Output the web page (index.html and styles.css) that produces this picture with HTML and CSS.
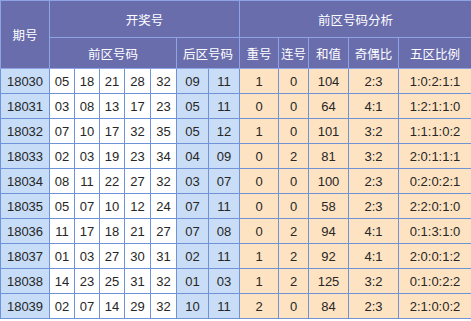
FILE: index.html
```html
<!DOCTYPE html>
<html>
<head>
<meta charset="utf-8">
<link rel="stylesheet" href="styles.css">
</head>
<body>
<table class="lotto">
<colgroup>
<col class="w49"><col class="w25"><col class="w25"><col class="w25"><col class="w26"><col class="w26"><col class="w32"><col class="w31"><col class="w39"><col class="w30"><col class="w40"><col class="w50"><col class="w73">
</colgroup>
<thead>
<tr class="h1">
<th rowspan="2" class="hd">期号</th>
<th colspan="7" class="hd">开奖号</th>
<th colspan="5" class="hd">前区号码分析</th>
</tr>
<tr class="h2">
<th colspan="5" class="hd">前区号码</th>
<th colspan="2" class="hd">后区号码</th>
<th class="hd">重号</th>
<th class="hd">连号</th>
<th class="hd">和值</th>
<th class="hd">奇偶比</th>
<th class="hd">五区比例</th>
</tr>
</thead>
<tbody>
<tr><td class="id">18030</td><td class="f">05</td><td class="f">18</td><td class="f">21</td><td class="f">28</td><td class="f">32</td><td class="b">09</td><td class="b">11</td><td class="a">1</td><td class="a">0</td><td class="a">104</td><td class="a">2:3</td><td class="a">1:0:2:1:1</td></tr>
<tr><td class="id">18031</td><td class="f">03</td><td class="f">08</td><td class="f">13</td><td class="f">17</td><td class="f">23</td><td class="b">05</td><td class="b">11</td><td class="a">0</td><td class="a">0</td><td class="a">64</td><td class="a">4:1</td><td class="a">1:2:1:1:0</td></tr>
<tr><td class="id">18032</td><td class="f">07</td><td class="f">10</td><td class="f">17</td><td class="f">32</td><td class="f">35</td><td class="b">05</td><td class="b">12</td><td class="a">1</td><td class="a">0</td><td class="a">101</td><td class="a">3:2</td><td class="a">1:1:1:0:2</td></tr>
<tr><td class="id">18033</td><td class="f">02</td><td class="f">03</td><td class="f">19</td><td class="f">23</td><td class="f">34</td><td class="b">04</td><td class="b">09</td><td class="a">0</td><td class="a">2</td><td class="a">81</td><td class="a">3:2</td><td class="a">2:0:1:1:1</td></tr>
<tr><td class="id">18034</td><td class="f">08</td><td class="f">11</td><td class="f">22</td><td class="f">27</td><td class="f">32</td><td class="b">03</td><td class="b">07</td><td class="a">0</td><td class="a">0</td><td class="a">100</td><td class="a">2:3</td><td class="a">0:2:0:2:1</td></tr>
<tr><td class="id">18035</td><td class="f">05</td><td class="f">07</td><td class="f">10</td><td class="f">12</td><td class="f">24</td><td class="b">07</td><td class="b">11</td><td class="a">0</td><td class="a">0</td><td class="a">58</td><td class="a">2:3</td><td class="a">2:2:0:1:0</td></tr>
<tr><td class="id">18036</td><td class="f">11</td><td class="f">17</td><td class="f">18</td><td class="f">21</td><td class="f">27</td><td class="b">07</td><td class="b">08</td><td class="a">0</td><td class="a">2</td><td class="a">94</td><td class="a">4:1</td><td class="a">0:1:3:1:0</td></tr>
<tr><td class="id">18037</td><td class="f">01</td><td class="f">03</td><td class="f">27</td><td class="f">30</td><td class="f">31</td><td class="b">02</td><td class="b">11</td><td class="a">1</td><td class="a">2</td><td class="a">92</td><td class="a">4:1</td><td class="a">2:0:0:1:2</td></tr>
<tr><td class="id">18038</td><td class="f">14</td><td class="f">23</td><td class="f">25</td><td class="f">31</td><td class="f">32</td><td class="b">01</td><td class="b">03</td><td class="a">1</td><td class="a">2</td><td class="a">125</td><td class="a">3:2</td><td class="a">0:1:0:2:2</td></tr>
<tr><td class="id">18039</td><td class="f">02</td><td class="f">07</td><td class="f">14</td><td class="f">29</td><td class="f">32</td><td class="b">10</td><td class="b">11</td><td class="a">2</td><td class="a">0</td><td class="a">84</td><td class="a">2:3</td><td class="a">2:1:0:0:2</td></tr>
</tbody>
</table>
</body>
</html>
```
FILE: styles.css
```css
html, body {
  margin: 0;
  padding: 0;
  background: #ffffff;
}
.lotto {
  border-collapse: collapse;
  table-layout: fixed;
  width: 471px;
  font-family: "Liberation Sans", Arial, "Noto Sans CJK SC", sans-serif;
  font-size: 13px;
  color: #262626;
}
.w49 { width: 49px; }
.w25 { width: 25px; }
.w26 { width: 26px; }
.w32 { width: 32px; }
.w31 { width: 31px; }
.w39 { width: 39px; }
.w30 { width: 30px; }
.w40 { width: 40px; }
.w50 { width: 50px; }
.w73 { width: 73px; }
.lotto th, .lotto td {
  padding: 0;
  text-align: center;
  vertical-align: middle;
  overflow: hidden;
  white-space: nowrap;
}
.hd {
  background: #696dac;
  color: #ffffff;
  font-family: "Noto Sans CJK SC", sans-serif;
  font-weight: normal;
  font-size: 12.5px;
  border: 1px solid #8fa4e6;
}
.h1 .hd { height: 36px; }
.h2 .hd { height: 30px; }
.lotto td {
  height: 24px;
  border: 1px solid #6f93d6;
}
.id { background: #c7dcf6; }
.f { background: #ffffff; }
.b { background: #c9ddf6; }
.a { background: #fde3c2; }
```
